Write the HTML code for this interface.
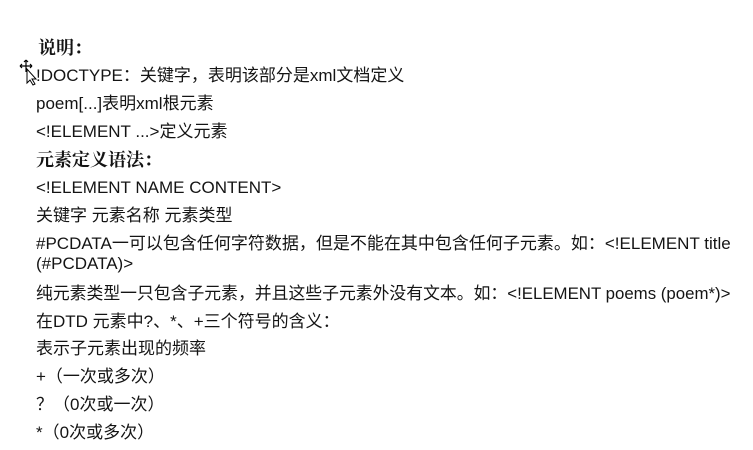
<!DOCTYPE html>
<html><head><meta charset="utf-8"><style>
body{margin:0;width:753px;height:450px;background:#fff;overflow:hidden;position:relative;font-family:"Liberation Sans","Noto Sans CJK SC",sans-serif;color:#141414;font-size:17px}
.l{position:absolute;left:36px;white-space:nowrap;line-height:20px}
b{font-family:"Noto Serif CJK SC",serif;font-weight:700;font-size:18px}
</style></head><body>
<div class="l" style="top:37px;left:38px"><b>说明：</b></div>
<div class="l" style="top:66px">!DOCTYPE：关键字，表明该部分是xml文档定义</div>
<svg style="position:absolute;left:17px;top:58px" width="22" height="28" viewBox="0 0 22 28"><path d="M9 2v12M3 8h12M9 2l-2 2M9 2l2 2M3 8l2-2M3 8l2 2M15 8l-2-2M15 8l-2 2" stroke="#000" fill="none" stroke-width="1.2"/><path d="M10 11v14l3-3 3 5 2-1-3-5h4z" fill="#fff" stroke="#000" stroke-width="1"/></svg>
<div class="l" style="top:94px">poem[...]表明xml根元素</div>
<div class="l" style="top:122px">&lt;!ELEMENT ...&gt;定义元素</div>
<div class="l" style="top:149px"><b>元素定义语法：</b></div>
<div class="l" style="top:178px">&lt;!ELEMENT NAME CONTENT&gt;</div>
<div class="l" style="top:206px">关键字 元素名称 元素类型</div>
<div class="l" style="top:234px">#PCDATA一可以包含任何字符数据，但是不能在其中包含任何子元素。如：&lt;!ELEMENT title</div>
<div class="l" style="top:254px">(#PCDATA)&gt;</div>
<div class="l" style="top:284px;transform:scaleX(0.99);transform-origin:0 0">纯元素类型一只包含子元素，并且这些子元素外没有文本。如：&lt;!ELEMENT poems (poem*)&gt;</div>
<div class="l" style="top:312px">在DTD 元素中?、*、+三个符号的含义：</div>
<div class="l" style="top:339px">表示子元素出现的频率</div>
<div class="l" style="top:367px">+（一次或多次）</div>
<div class="l" style="top:395px">？（0次或一次）</div>
<div class="l" style="top:423px">*（0次或多次）</div>
</body></html>
